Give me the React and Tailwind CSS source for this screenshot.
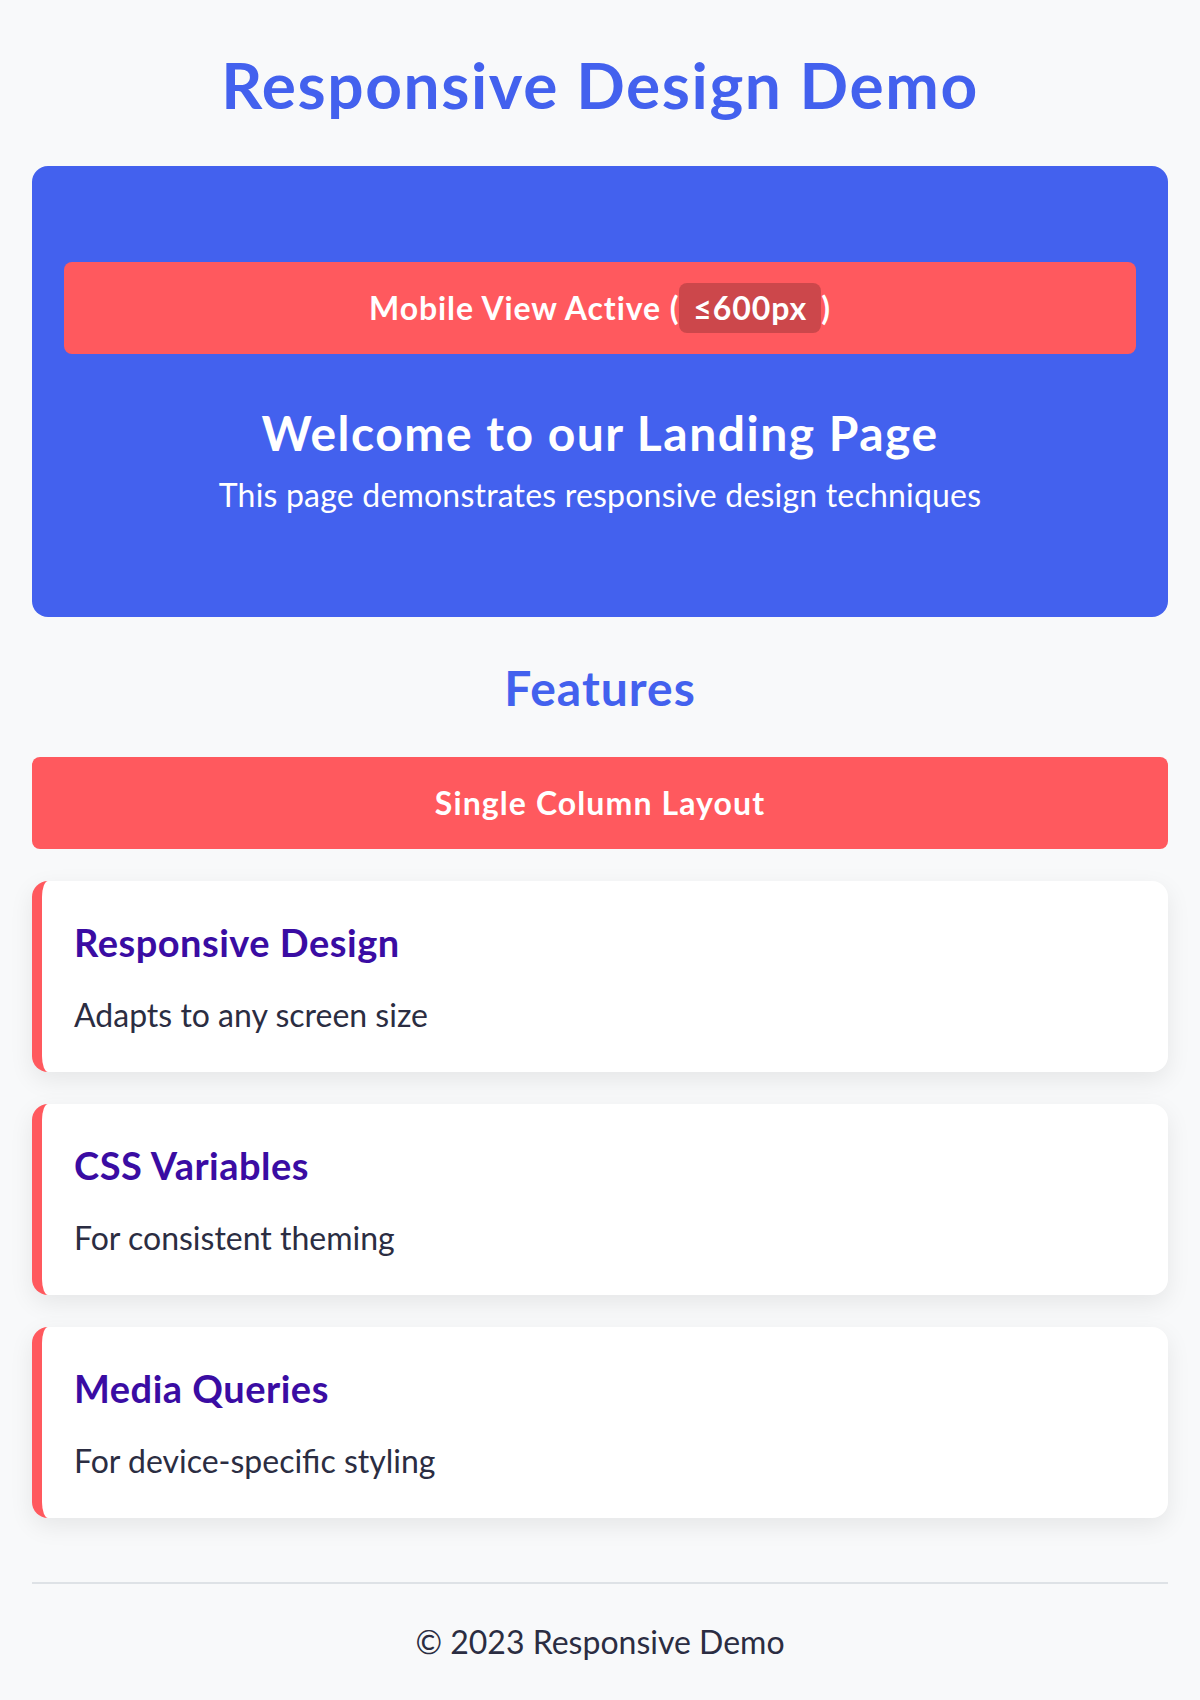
import React from 'react';

const features = [
    { title: 'Responsive Design', text: 'Adapts to any screen size' },
    { title: 'CSS Variables', text: 'For consistent theming' },
    { title: 'Media Queries', text: 'For device-specific styling' },
];

const FeatureCard = ({ title, text }) => (
    <div className="bg-white rounded-[16px] border-l-[10px] border-[#ff595e] shadow-[0_8px_24px_rgba(0,0,0,0.08)] pl-[32px] pr-[32px] pt-[38px] pb-[33px]">
        <h3 className="text-[38px] leading-[46px] font-bold tracking-[0.5px] text-[#3a0ca3]">{title}</h3>
        <p className="mt-[26px] text-[32px] leading-[48px] text-[#2b2d42]">{text}</p>
    </div>
);

export default function App() {
    return (
        <div className="min-h-[1700px] bg-[#f8f9fa] px-[32px] pt-[47px] font-['Lato',sans-serif] text-[#2b2d42]">
            <h1 className="text-center text-[64px] leading-[76px] font-bold tracking-[1.6px] text-[#4361ee]">
                Responsive Design Demo
            </h1>

            {/* Hero */}
            <section className="mt-[43px] bg-[#4361ee] rounded-[16px] px-[32px] pt-[96px] pb-[98px] text-white text-center">
                <div className="bg-[#ff595e] rounded-[8px] py-[21px]">
                    <p className="text-[32px] leading-[48px] font-bold tracking-[0.9px]">
                        Mobile View Active (<span className="inline-block bg-black/20 rounded-[8px] px-[14px] py-[5px] leading-[40px]">≤600px</span>)
                    </p>
                </div>
                <h2 className="mt-[50px] text-[48px] leading-[58px] font-bold tracking-[1.5px]">Welcome to our Landing Page</h2>
                <p className="mt-[9px] text-[32px] leading-[48px] tracking-[0.2px]">This page demonstrates responsive design techniques</p>
            </section>

            {/* Features */}
            <h2 className="mt-[42px] text-center text-[48px] leading-[58px] font-bold tracking-[1px] text-[#4361ee]">Features</h2>
            <div className="mt-[40px] h-[92px] flex items-center justify-center bg-[#ff595e] rounded-[8px] text-white text-[32px] leading-[48px] font-bold tracking-[1.1px]">
                Single Column Layout
            </div>

            <div className="mt-[32px] flex flex-col gap-[32px]">
                {features.map((f) => (
                    <FeatureCard key={f.title} {...f} />
                ))}
            </div>

            <footer className="mt-[64px] border-t-[2px] border-[#dee2e6] pt-[34px] text-center">
                <p className="text-[32px] leading-[48px] text-[#2b2d42]">© 2023 Responsive Demo</p>
            </footer>
        </div>
    );
}
